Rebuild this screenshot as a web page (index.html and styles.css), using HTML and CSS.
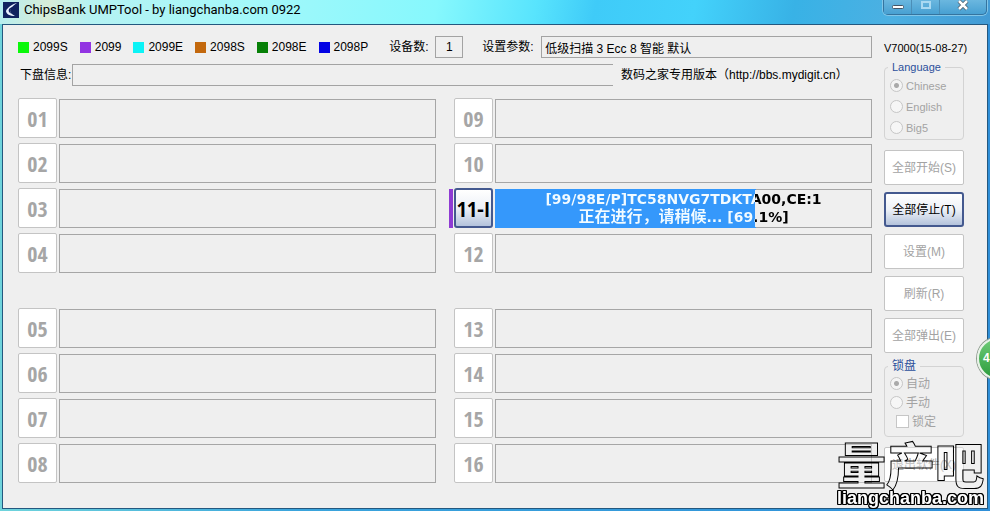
FILE: index.html
```html
<!DOCTYPE html>
<html lang="zh-CN">
<head>
<meta charset="utf-8">
<meta name="viewport" content="width=device-width, initial-scale=1">
<title>ChipsBank UMPTool</title>
<link rel="stylesheet" href="styles.css">
</head>
<body>
<div class="window">
  <header class="titlebar">
    <svg class="app-icon" viewBox="0 0 16 16" aria-hidden="true"><rect width="16" height="16" fill="#10225f"/><path d="M14 1C9 2 4 6 3 9c0 3 4 5 9 5-3-2-5-3-5-6 1-3 4-5 7-7z" fill="#e9f1ff"/><path d="M10 5c-3 2-4 4-1 7-3-1-4-3-3-5 1-1 2-2 4-2z" fill="#10225f"/></svg>
    <h1 class="title">ChipsBank UMPTool - by liangchanba.com 0922</h1>
    <div class="controls">
      <button class="control" aria-label="最小化"><svg viewBox="0 0 14 14"><rect x="1.500" y="5.500" width="11" height="3" rx="1" fill="#fff" stroke="#456"/></svg></button>
      <button class="control" aria-label="最大化" disabled><svg viewBox="0 0 14 14"><rect x="3" y="2" width="8" height="6" fill="none" stroke="#a9d9f2" stroke-width="2"/></svg></button>
      <button class="control control-close" aria-label="关闭"><svg viewBox="0 0 14 14"><path d="M3 1l8 8M11 1L3 9" stroke="#456" stroke-width="4"/><path d="M3 1l8 8M11 1L3 9" stroke="#fff" stroke-width="2.500"/></svg></button>
    </div>
  </header>
  <div class="client">
    <main class="main">
      <div class="row">
        <ul class="legend-list">
          <li><i class="swatch lime"></i>2099S</li>
          <li><i class="swatch violet"></i>2099</li>
          <li><i class="swatch cyan"></i>2099E</li>
          <li><i class="swatch orange"></i>2098S</li>
          <li><i class="swatch green"></i>2098E</li>
          <li><i class="swatch blue"></i>2098P</li>
        </ul>
        <label class="count-label" for="count">设备数:</label>
        <input class="field count" id="count" value="1" readonly>
        <label class="param-label" for="params">设置参数:</label>
        <input class="field params" id="params" value="低级扫描 3 Ecc 8 智能 默认" readonly>
      </div>
      <div class="row info-row">
        <label for="info">下盘信息:</label>
        <input class="field info" id="info" readonly>
        <p class="edition">数码之家专用版本（http://bbs.mydigit.cn）</p>
      </div>
      <div class="ports">
        <div class="group">
          <div class="slot"><button class="port" disabled>01</button><div class="status"></div></div>
          <div class="slot"><button class="port" disabled>02</button><div class="status"></div></div>
          <div class="slot"><button class="port" disabled>03</button><div class="status"></div></div>
          <div class="slot"><button class="port" disabled>04</button><div class="status"></div></div>
        </div>
        <div class="group">
          <div class="slot"><button class="port" disabled>09</button><div class="status"></div></div>
          <div class="slot"><button class="port" disabled>10</button><div class="status"></div></div>
          <div class="slot active"><button class="port">11-I</button><div class="status progress" style="--done: 69.1%"><p><span class="line">[99/98E/P]TC58NVG7TDKTA00,CE:1</span><span class="line"><span class="phase">正在进行，请稍候</span>... [69.1%]</span></p></div></div>
          <div class="slot"><button class="port" disabled>12</button><div class="status"></div></div>
        </div>
        <div class="group">
          <div class="slot"><button class="port" disabled>05</button><div class="status"></div></div>
          <div class="slot"><button class="port" disabled>06</button><div class="status"></div></div>
          <div class="slot"><button class="port" disabled>07</button><div class="status"></div></div>
          <div class="slot"><button class="port" disabled>08</button><div class="status"></div></div>
        </div>
        <div class="group">
          <div class="slot"><button class="port" disabled>13</button><div class="status"></div></div>
          <div class="slot"><button class="port" disabled>14</button><div class="status"></div></div>
          <div class="slot"><button class="port" disabled>15</button><div class="status"></div></div>
          <div class="slot"><button class="port" disabled>16</button><div class="status"></div></div>
        </div>
      </div>
    </main>
    <aside class="side">
      <p class="version">V7000(15-08-27)</p>
      <fieldset class="box language">
        <legend>Language</legend>
        <label><input type="radio" name="lang" checked disabled>Chinese</label>
        <label><input type="radio" name="lang" disabled>English</label>
        <label><input type="radio" name="lang" disabled>Big5</label>
      </fieldset>
      <div class="actions">
        <button class="action" disabled>全部开始(S)</button>
        <button class="action">全部停止(T)</button>
        <button class="action" disabled>设置(M)</button>
        <button class="action" disabled>刷新(R)</button>
        <button class="action" disabled>全部弹出(E)</button>
      </div>
      <fieldset class="box lock">
        <legend>锁盘</legend>
        <label><input type="radio" name="lock" checked disabled>自动</label>
        <label><input type="radio" name="lock" disabled>手动</label>
        <label class="tick"><input type="checkbox" disabled>锁定</label>
      </fieldset>
      <button class="action exit" disabled>退出软件(X)</button>
    </aside>
  </div>
  <div class="badge">4</div>
  <div class="watermark"><div class="mark-name">量产吧</div><div class="mark-site">liangchanba.com</div></div>
</div>
</body>
</html>
```
FILE: styles.css
```css
* { box-sizing: border-box; }

body {
  margin: 0;
  font: 12px/16px "Liberation Sans", "Noto Sans CJK SC", sans-serif;
  color: #000;
}

p, h1, ul { margin: 0; padding: 0; }
button, input { font: inherit; color: inherit; }

.window {
  position: relative;
  display: flex;
  flex-direction: column;
  min-height: 100vh;
  padding: 0 2px 2px;
  overflow: hidden;
  background: linear-gradient(90deg, #6fd4dc, #3aa4dc 30%, #2f8fd8);
}

.titlebar {
  display: flex;
  align-items: flex-start;
  height: 24px;
  margin: 0 -2px;
  padding: 0 3px;
  background: linear-gradient(100deg, #b4eef0 0%, #d8ecd8 5%, #b6f2f2 9%, #a4f8fa 25%, #86f8fd 44%, #58e4fd 54%, #3fcbf8 60%, #43d2fb 70%, #38b2e6 80%, #4cb0e2 90%, #429ad4 100%);
}

.app-icon { width: 16px; height: 16px; margin-top: 2px; }

.title {
  margin-left: 5px;
  font: 13px/19px Roboto, sans-serif;
}

.controls {
  display: flex;
  margin-left: auto;
  height: 15px;
  border: 1px solid #35749f;
  border-top: 0;
  border-radius: 0 0 5px 5px;
  box-shadow: 0 0 0 1px #82c6e8;
}

.control {
  display: flex;
  justify-content: center;
  align-items: center;
  width: 28px;
  padding: 0;
  border: 0;
  border-right: 1px solid #4b8eb7;
  background: linear-gradient(#6bb7df, #48a0d2);
}
.control svg { width: 14px; height: 14px; }
.control-close { width: 46px; border-right: 0; border-radius: 0 0 5px 0; }

.client {
  flex: 1;
  display: grid;
  grid-template-columns: 1fr 80px;
  column-gap: 12px;
  padding: 11px 23px 22px 15px;
  border: 1px solid #24587f;
  background: #efefef;
}

.row { display: flex; align-items: center; height: 22px; }
.info-row { margin-top: 6px; }

.legend-list { display: flex; gap: 12px; list-style: none; }
.legend-list li { display: flex; align-items: center; gap: 4px; }
.swatch { width: 11px; height: 11px; }
.lime { background: #0bf80b; }
.violet { background: #9234e2; }
.cyan { background: #0cf3f6; }
.orange { background: #c3680d; }
.green { background: #078007; }
.blue { background: #0303e4; }

.field {
  height: 22px;
  min-width: 0;
  padding: 0 3px;
  border: 1px solid #a3a3a3;
  border-radius: 0;
  background: #efefef;
  outline: none;
}
.count-label { width: 46px; margin-left: 21px; }
.count { width: 28px; text-align: center; }
.param-label { width: 59px; margin-left: 19px; }
.params { flex: 1; }
.info-row label { width: 54px; padding-left: 2px; white-space: nowrap; }
.info { flex: 1; border-right: 0; }
.edition { width: 259px; padding-left: 8px; white-space: nowrap; }

.ports {
  display: grid;
  grid-template-columns: 1fr 1fr;
  gap: 35px 18px;
  margin-top: 12px;
}
.group { display: grid; gap: 5px; }
.slot {
  position: relative;
  display: grid;
  grid-template-columns: 39px 1fr;
  grid-template-rows: 40px;
  gap: 2px;
}

.port {
  padding: 0;
  border: 1px solid #c4c4c4;
  border-radius: 2px;
  background: #fff;
  font: bold 22px/24px "Open Sans Condensed", "Roboto Condensed", "Noto Sans Condensed", Roboto, sans-serif;
  white-space: nowrap;
}
.port:disabled { color: #a6a6a6; }

.status { margin-top: 1px; border: 1px solid #a6a6a6; }

.active::before {
  content: "";
  position: absolute;
  left: -5px;
  top: 1px;
  bottom: 0;
  width: 4px;
  background: #8f3bd3;
}
.active .port, .action:enabled {
  border: 2px solid #44598f;
  border-radius: 3px;
  background: linear-gradient(#fff, #edf1f7 50%, #b4c3dc);
}

.progress {
  border-image: linear-gradient(90deg, #3598fb var(--done), #a6a6a6 var(--done)) 1;
  background: linear-gradient(90deg, #3598fb var(--done), transparent var(--done));
}
.progress p {
  font: bold 14px/18px "DejaVu Sans", "Noto Sans CJK SC", sans-serif;
  text-align: center;
  color: transparent;
  background: linear-gradient(90deg, #f2fbff var(--done), #000 var(--done));
  -webkit-background-clip: text;
  background-clip: text;
}
.line { display: block; height: 18px; white-space: nowrap; }
.phase { font-size: 16px; }

.side { display: flex; flex-direction: column; }
.version { padding-top: 4px; white-space: nowrap; font-size: 11px; }

.box {
  min-width: 0;
  margin: 0;
  padding: 0 5px;
  border: 1px solid #d3d3d3;
  border-radius: 4px;
}
.box legend { padding: 0 4px; margin-left: -2px; color: #2c4f9c; line-height: 16px; }
.box label { display: flex; align-items: center; gap: 3px; height: 21px; color: #a3a3a3; }
.language { height: 81px; margin-top: 3px; }
.language label { font-size: 11px; }
.language legend { font-size: 11px; }
.lock { height: 79px; margin-top: 5px; }
.lock label { height: 19px; }
.box .tick { padding-left: 6px; }

.box input {
  appearance: none;
  width: 13px;
  height: 13px;
  margin: 0;
  border: 1px solid #c6c6c6;
  background: #f6f6f6;
}
.box input[type="radio"] { border-radius: 50%; }
.box input[type="radio"]:checked { background: radial-gradient(circle, #aaa 2px, #f4f4f4 3px); }
.box input[type="checkbox"] { background: #fff; }

.actions { display: grid; gap: 7px; margin-top: 10px; }
.action {
  height: 35px;
  padding: 0;
  border: 1px solid #c4c4c4;
  border-radius: 2px;
  background: #fff;
  white-space: nowrap;
}
.action:disabled { color: #a3a3a3; }
.exit { margin-top: 10px; }

.badge {
  position: absolute;
  right: -30px;
  top: 337px;
  width: 43px;
  height: 43px;
  padding-left: 4px;
  border: 2px solid #e8f3e8;
  border-radius: 50%;
  box-shadow: 0 0 0 1px #8d9a8d;
  background: linear-gradient(#6fcc78, #2b9c3c);
  color: #fff;
  font-weight: bold;
  line-height: 38px;
}

.watermark {
  position: absolute;
  right: 6px;
  bottom: 4px;
  text-align: center;
  white-space: nowrap;
  pointer-events: none;
}
.mark-name {
  font: 900 49px/52px "Noto Sans CJK SC", sans-serif;
  -webkit-text-stroke: 1px #000;
  color: #f3f3f366;
}
.mark-site {
  font: bold 18px/18px "Liberation Sans", sans-serif;
  color: #fff;
  filter: drop-shadow(1px 0 #000) drop-shadow(-1px 0 #000) drop-shadow(0 1px #000) drop-shadow(0 -1px #000);
}
```
